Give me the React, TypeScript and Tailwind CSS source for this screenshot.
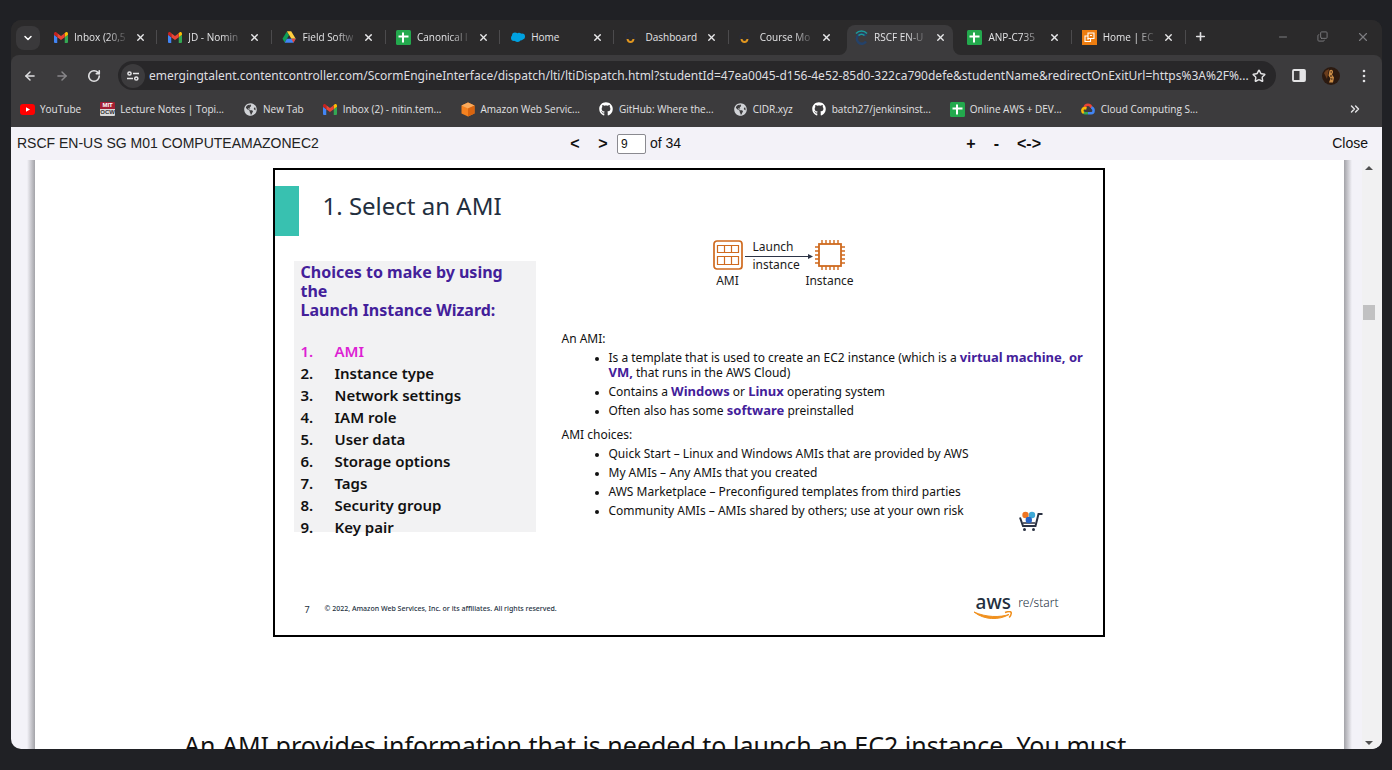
import React from 'react';
import { ArrowLeft, ArrowRight, ChevronDown, ChevronsRight, Copy, Minus, Plus, RotateCw, Star, X } from 'lucide-react';
import { FaGithub, FaGlobeAmericas } from 'react-icons/fa';

function Gmail() {
  return (
    <svg viewBox="0 0 28 22" className="h-[11px] w-[14px]">
      <path fill="#4285f4" d="M2 22h4.500V10.500L0 5.500V20a2 2 0 0 0 2 2z" />
      <path fill="#34a853" d="M21.500 22H26a2 2 0 0 0 2-2V5.500l-6.500 5z" />
      <path fill="#fbbc04" d="M21.500 2.500v8L28 5.500V3c0-2.500-2.800-3.900-4.700-2.400z" />
      <path fill="#ea4335" d="M6.500 10.500v-8L14 8.200l7.500-5.700v8L14 16z" />
      <path fill="#c5221f" d="M0 3v2.500l6.500 5v-8L4.700.6C2.800-.9 0 .5 0 3z" />
    </svg>
  );
}

function Drive() {
  return (
    <svg viewBox="0 0 28 25" className="h-[12px] w-[14px]">
      <path fill="#0f9d58" d="M9.500 1 14 9 5 24 .4 16z" />
      <path fill="#ffcf3f" d="M9.500.5h9L28 16h-9z" />
      <path fill="#4285f4" d="M9.500 16H28l-4.700 8.500H5z" />
      <path fill="#ea4335" d="M19 16h9l-4.700 8.500z" />
    </svg>
  );
}

function Sheets() {
  return (
    <svg viewBox="0 0 15 15" className="size-[15px]">
      <rect width="15" height="15" rx="1.500" fill="#23a94d" />
      <path d="M7 2.500v10M2.500 6.500h10" stroke="#fff" strokeWidth="2" />
    </svg>
  );
}

function Salesforce() {
  return (
    <svg viewBox="0 0 28 20" className="h-[10px] w-[14px]">
      <g fill="#00a1e0">
        <circle cx="8" cy="7" r="6" />
        <circle cx="16" cy="6.500" r="5" />
        <circle cx="22" cy="9" r="6" />
        <circle cx="6" cy="12" r="6" />
        <circle cx="13" cy="14" r="6" />
        <circle cx="19" cy="12" r="5" />
      </g>
    </svg>
  );
}

function Canvas() {
  return (
    <svg viewBox="0 0 14 14" className="size-[14px]">
      <circle cx="5.500" cy="7" r="4.500" fill="none" stroke="#2a2c39" strokeWidth="1.500" />
      <path d="M2.500 9c.5 4 5.500 4 6 0" fill="none" stroke="#e0961f" strokeWidth="2" />
    </svg>
  );
}

function Talent() {
  return (
    <svg viewBox="0 0 14 15" className="h-[15px] w-[14px]" fill="none">
      <path d="M12 6A5 5 0 1 0 12 11.500" stroke="#24426a" strokeWidth="2.400" />
      <path d="M2 3.500c3-3.300 8-3.300 11 0M4.500 5.500c1.700-1.700 4.300-1.700 6 0" stroke="#1c9a9b" strokeWidth="1.600" />
    </svg>
  );
}

function Ec2() {
  return (
    <svg viewBox="0 0 15 15" className="size-[15px]" fill="none">
      <rect width="15" height="15" fill="#ed7d10" />
      <path d="M6 3h6v5.500H6zM8.500 8.500V11.500H3V6h3" stroke="#fff" strokeWidth="1.100" />
      <path d="M8 5.500h2M5 9h2" stroke="#fff" />
    </svg>
  );
}

function YouTube() {
  return (
    <svg viewBox="0 0 15 11" className="h-[11px] w-[15px]">
      <rect width="15" height="11" rx="3" fill="#f00" />
      <path d="M6 3.200v4.600l4-2.300z" fill="#fff" />
    </svg>
  );
}

function MitOcw() {
  return (
    <span aria-hidden="true" className="flex w-[15px] flex-col overflow-hidden rounded-[1px] text-center font-['Liberation_Sans',sans-serif] text-[6px] leading-[7px] font-bold">
      <span className="bg-[#a31f34] text-white">MIT</span>
      <span className="bg-[#d8d8d8] text-[#333]">OCW</span>
    </span>
  );
}

function AwsCube() {
  return (
    <svg viewBox="0 0 14 15" className="h-[15px] w-[14px]">
      <path d="M7 .5 13.500 3.500v8L7 14.500.5 11.500v-8z" fill="#f58220" />
      <path d="M7 .5 13.500 3.500 7 6.500.5 3.500z" fill="#fbaa5c" />
      <path d="M7 6.500l6.500-3v8L7 14.500z" fill="#d9640f" />
    </svg>
  );
}

function GoogleCloud() {
  return (
    <svg viewBox="0 0 28 23" className="h-[12px] w-[14px]" fill="none" strokeWidth="5">
      <path d="M7 9c1.500-8 12-8 14 0" stroke="#ea4335" />
      <path d="M20.500 8.500c6.500 1.500 6 11.500 0 11.500H14" stroke="#4285f4" />
      <path d="M14 20H8l-3-1" stroke="#34a853" />
      <path d="M5.500 19.500C1 17 2 9.500 8 9.500l3 1" stroke="#fbbc04" />
    </svg>
  );
}

const tabs = [
  { title: 'Inbox (20,5', icon: <Gmail />, fade: true },
  { title: 'JD - Nomin', icon: <Gmail />, fade: true },
  { title: 'Field Softw', icon: <Drive />, fade: true },
  { title: 'Canonical l', icon: <Sheets />, fade: true },
  { title: 'Home', icon: <Salesforce /> },
  { title: 'Dashboard', icon: <Canvas /> },
  { title: 'Course Mo', icon: <Canvas />, fade: true },
  { title: 'RSCF EN-U', icon: <Talent />, active: true, fade: true },
  { title: 'ANP-C735', icon: <Sheets />, fade: true },
  { title: 'Home | EC', icon: <Ec2 />, fade: true },
];

const bookmarks = [
  { title: 'YouTube', icon: <YouTube /> },
  { title: 'Lecture Notes | Topi...', icon: <MitOcw /> },
  { title: 'New Tab', icon: <FaGlobeAmericas className="size-[13px] text-[#d0d2d6]" /> },
  { title: 'Inbox (2) - nitin.tem...', icon: <Gmail /> },
  { title: 'Amazon Web Servic...', icon: <AwsCube /> },
  { title: 'GitHub: Where the...', icon: <FaGithub className="size-[14px] text-white" /> },
  { title: 'CIDR.xyz', icon: <FaGlobeAmericas className="size-[13px] text-[#d0d2d6]" /> },
  { title: 'batch27/jenkinsinst...', icon: <FaGithub className="size-[14px] text-white" /> },
  { title: 'Online AWS + DEV...', icon: <Sheets /> },
  { title: 'Cloud Computing S...', icon: <GoogleCloud /> },
];

function TabFlare({ side }: { side: 'left' | 'right' }) {
  return (
    <svg viewBox="0 0 8 8" className={side === 'left' ? 'absolute bottom-0 -left-2 size-2' : 'absolute -right-2 bottom-0 size-2'}>
      <path fill="#3c3b3d" d={side === 'left' ? 'M8 0v8H0a8 8 0 0 0 8-8z' : 'M0 0v8h8a8 8 0 0 1-8-8z'} />
    </svg>
  );
}

function TabStrip() {
  return (
    <div className="flex h-[35px] shrink-0 items-stretch bg-[#2b2a2b]">
      <button aria-label="Search tabs" className="my-auto ml-[5px] flex size-6 items-center justify-center rounded-lg bg-[#3a393b] text-white">
        <ChevronDown className="size-3" strokeWidth={3} />
      </button>
      <div role="tablist" className="ml-[3px] flex min-w-0 flex-1 pt-[5px]">
        {tabs.map((tab, i) => (
          <div key={i} className={tab.active || i === 6 ? 'min-w-0 flex-1' : 'min-w-0 flex-1 bg-[linear-gradient(#4c4b4d,#4c4b4d)] bg-[length:1px_14px] bg-[position:right_5px] bg-no-repeat'}>
            <div className={tab.active ? 'relative mx-1 flex h-[30px] items-center rounded-t-lg bg-[#3c3b3d] pb-[6px]' : 'mx-1 flex h-[30px] items-center pb-[6px]'}>
              {tab.active && <TabFlare side="left" />}
              <button role="tab" aria-selected={!!tab.active} className="ml-[6px] flex min-w-0 flex-1 items-center gap-[6px]">
                <span className="flex w-[15px] shrink-0 justify-center">{tab.icon}</span>
                <span className={tab.fade
                  ? 'flex-1 text-left text-[10px] leading-4 whitespace-nowrap text-[#e4e4e6] [mask-image:linear-gradient(to_right,#000_60%,transparent)]'
                  : 'flex-1 text-left text-[10px] leading-4 whitespace-nowrap text-[#e4e4e6]'}>
                  {tab.title}
                </span>
              </button>
              <button aria-label={'Close ' + tab.title} className="mr-1 ml-[2px] flex size-[18px] shrink-0 items-center justify-center text-[#e8e8ea]">
                <X className="size-[11px]" strokeWidth={3} />
              </button>
              {tab.active && <TabFlare side="right" />}
            </div>
          </div>
        ))}
      </div>
      <div className="flex w-[196px] shrink-0 items-center justify-between pr-3 pb-[2px] pl-2 text-[#7d7d80]">
        <button aria-label="New tab" className="text-[#e0e0e2]">
          <Plus className="size-[13px]" strokeWidth={3} />
        </button>
        <div className="flex gap-7">
          <button aria-label="Minimize"><Minus className="size-3" strokeWidth={2} /></button>
          <button aria-label="Restore"><Copy className="size-[11px] rotate-180 -scale-x-100" strokeWidth={2} /></button>
          <button aria-label="Close window"><X className="size-[14px]" strokeWidth={2} /></button>
        </div>
      </div>
    </div>
  );
}

function AddressBar() {
  return (
    <div className="flex h-[41px] shrink-0 items-center rounded-t-lg bg-[#3c3b3d] text-[#e0e0e2]">
      <button aria-label="Back" className="ml-3"><ArrowLeft className="size-[14px]" strokeWidth={2.500} /></button>
      <button aria-label="Forward" className="ml-[18px] text-[#88878a]"><ArrowRight className="size-[14px]" strokeWidth={2.500} /></button>
      <button aria-label="Reload" className="ml-[18px]"><RotateCw className="size-[14px]" strokeWidth={2.800} /></button>
      <div className="ml-[17px] flex h-[29px] min-w-0 flex-1 items-center rounded-full bg-[#282729] pr-[10px] pl-[3px]">
        <button aria-label="Site information" className="flex size-6 shrink-0 items-center justify-center rounded-full bg-[#3c3b3d]">
          <svg viewBox="0 0 12 10" className="h-[10px] w-3" fill="none" stroke="#e6e6e8" strokeWidth="1.500">
            <circle cx="2.500" cy="2.500" r="1.600" />
            <path d="M6 2.500h6M0 7.500h6" />
            <circle cx="9.300" cy="7.500" r="1.600" />
          </svg>
        </button>
        <input
          aria-label="Address"
          readOnly
          className="ml-1 min-w-0 flex-1 bg-transparent font-['Noto_Sans','Open_Sans',sans-serif] text-[12px] text-[#dedee0] outline-none"
          value="emergingtalent.contentcontroller.com/ScormEngineInterface/dispatch/lti/ltiDispatch.html?studentId=47ea0045-d156-4e52-85d0-322ca790defe&studentName&redirectOnExitUrl=https%3A%2F%..."
        />
        <button aria-label="Bookmark this page" className="ml-px"><Star className="size-[14px]" strokeWidth={2.500} /></button>
      </div>
      <button aria-label="Side panel" className="ml-4">
        <svg viewBox="0 0 14 13" className="h-[13px] w-[14px]">
          <rect x="1" y="1" width="12" height="11" rx="1" fill="none" stroke="#e4e4e6" strokeWidth="1.800" />
          <path d="M7.500 1H13v11H7.500z" fill="#e4e4e6" />
        </svg>
      </button>
      <button aria-label="Profile" className="ml-4">
        <svg viewBox="0 0 18 18" className="size-[18px]">
          <circle cx="9" cy="9" r="9" fill="#2c1a10" />
          <path d="M2 6a8 8 0 0 1 5-4L5 12z" fill="#6b3d1c" />
          <path d="M7.500 3.500c1.500-1.500 4-.5 3.500 2l-1 2 2 3-1 5H7l1.500-4-2-3z" fill="#c98b45" />
          <path d="M8.500 5h1.500M8 9h2M9 12h1.500" stroke="#2c1a10" />
        </svg>
      </button>
      <button aria-label="Menu" className="mr-4 ml-[22px]">
        <svg viewBox="0 0 4 14" className="h-[14px] w-1" fill="#e0e0e2">
          <circle cx="2" cy="2" r="1.300" />
          <circle cx="2" cy="7" r="1.300" />
          <circle cx="2" cy="12" r="1.300" />
        </svg>
      </button>
    </div>
  );
}

function Bookmarks() {
  return (
    <nav aria-label="Bookmarks" className="flex h-[31px] shrink-0 items-center bg-[#3c3b3d] pb-[5px] pl-[9px] text-[10px] whitespace-nowrap text-[#e2e2e4]">
      <div className="flex min-w-0 flex-1 gap-[19px] overflow-hidden">
        {bookmarks.map((b) => (
          <a key={b.title} href="#" className="flex shrink-0 items-center gap-[5px]">
            <span className="flex w-[15px] justify-center">{b.icon}</span>
            {b.title}
          </a>
        ))}
      </div>
      <button aria-label="More bookmarks" className="mr-5"><ChevronsRight className="size-[14px]" strokeWidth={2.500} /></button>
    </nav>
  );
}

function ViewerBar() {
  return (
    <div className="flex h-[33px] shrink-0 items-center bg-[#f3f2f8] pr-[14px] pl-[6px] font-['Liberation_Sans',Arial,sans-serif] text-[14px] text-[#111]">
      <h1 className="w-[552px] text-[#222]">RSCF EN-US SG M01 COMPUTEAMAZONEC2</h1>
      <button aria-label="Previous page" className="w-3 text-[16px] font-bold">&lt;</button>
      <button aria-label="Next page" className="ml-4 w-3 text-[16px] font-bold">&gt;</button>
      <label className="ml-2 flex items-center gap-1">
        <input aria-label="Page number" defaultValue="9" className="h-5 w-[29px] rounded-[2px] border border-[#8a8a90] bg-white px-[3px] text-[12px]" />
        <span>of 34</span>
      </label>
      <div className="flex flex-1 items-center justify-center gap-[18px] pr-[6px] text-[16px] font-bold">
        <button aria-label="Zoom in">+</button>
        <button aria-label="Zoom out">-</button>
        <button aria-label="Fit width">&lt;-&gt;</button>
      </div>
      <button>Close</button>
    </div>
  );
}

const steps = ['AMI', 'Instance type', 'Network settings', 'IAM role', 'User data', 'Storage options', 'Tags', 'Security group', 'Key pair'];

function Diagram() {
  return (
    <div className="ml-[151px] flex items-start text-[12px] leading-4 text-[#1b1b1b]">
      <div className="flex w-[30px] flex-col items-center gap-[3px]">
        <svg viewBox="0 0 30 30" className="size-[30px]" fill="none" stroke="#cf6a1e" strokeWidth="1.700">
          <rect x="1" y="1" width="28" height="28" rx="3" />
          <path d="M4.500 5.500h21v7h-21zM11.500 5.500v7M18.500 5.500v7M4.500 16.500h21v8h-21zM11.500 16.500v8M18.500 16.500v8" strokeWidth="1.200" />
        </svg>
        <span>AMI</span>
      </div>
      <div className="flex w-[72px] flex-col pl-[2px]">
        <span className="pl-2 leading-[14px]">Launch</span>
        <svg viewBox="0 0 68 6" className="h-[6px] w-[68px] shrink-0">
          <path d="M0 2.500h64" stroke="#2c3446" />
          <path d="M63 0l5 2.500-5 2.500z" fill="#2c3446" />
        </svg>
        <span className="pl-2 leading-[10px]">instance</span>
      </div>
      <div className="flex w-[30px] flex-col items-center gap-[3px] whitespace-nowrap">
        <svg viewBox="0 0 30 30" className="size-[30px]" fill="none" stroke="#cf6a1e">
          <rect x="4" y="4" width="22" height="22" strokeWidth="1.800" />
          <path strokeWidth="1.400" d="M7 0v4M11 0v4M15 0v4M19 0v4M23 0v4M7 26v4M11 26v4M15 26v4M19 26v4M23 26v4M0 7h4M0 11h4M0 15h4M0 19h4M0 23h4M26 7h4M26 11h4M26 15h4M26 19h4M26 23h4" />
        </svg>
        <span>Instance</span>
      </div>
    </div>
  );
}

function Key({ children }: { children: React.ReactNode }) {
  return <strong className="text-[13px] leading-none font-bold text-[#43209a]">{children}</strong>;
}

function Slide() {
  return (
    <section className="mx-auto flex h-[469px] w-full max-w-[832px] flex-col border-2 border-black bg-white pt-4">
      <header className="flex h-[50px] shrink-0 items-stretch">
        <span className="w-6 bg-[#38c1b0]" />
        <h2 className="ml-6 text-[24px] leading-10 text-[#232f3e]">1. Select an AMI</h2>
      </header>
      <div className="flex flex-1 items-start">
        <aside className="mt-[25px] ml-[19px] h-[271px] w-[242px] shrink-0 bg-[#f2f2f3] pr-4 pl-[7px] font-bold">
          <h3 className="pt-[2px] text-[16px] leading-[19px] text-[#43209a]">
            Choices to make by using the
            <br />
            Launch Instance Wizard:
          </h3>
          <ol className="mt-5 text-[15px] leading-[22px] font-semibold text-[#111]">
            {steps.map((s, i) => (
              <li key={s} className={i === 0 ? 'flex text-[#dd1fd3]' : 'flex'}>
                <span className="w-[34px]">{i + 1}.</span>
                {s}
              </li>
            ))}
          </ol>
        </aside>
        <div className="mt-1 ml-[26px] min-w-0 flex-1">
          <Diagram />
          <div className="mt-[42px] flex flex-col gap-1 text-[12px] leading-[15px] text-[#111]">
            <p>An AMI:</p>
            <ul className="flex list-disc flex-col gap-1 pr-2 pl-[47px] marker:text-[10px]">
              <li>
                Is a template that is used to create an EC2 instance (which is a <Key>virtual machine, or</Key>
                <br />
                <Key>VM,</Key> that runs in the AWS Cloud)
              </li>
              <li>Contains a <Key>Windows</Key> or <Key>Linux</Key> operating system</li>
              <li>Often also has some <Key>software</Key> preinstalled</li>
            </ul>
            <p className="mt-[5px]">AMI choices:</p>
            <ul className="flex list-disc flex-col gap-1 pl-[47px] marker:text-[10px]">
              <li>Quick Start – Linux and Windows AMIs that are provided by AWS</li>
              <li>My AMIs – Any AMIs that you created</li>
              <li>AWS Marketplace – Preconfigured templates from third parties</li>
              <li>Community AMIs – AMIs shared by others; use at your own risk</li>
            </ul>
          </div>
          <svg viewBox="0 0 24 20" className="-mt-[7px] ml-[457px] h-5 w-6" fill="none">
            <path d="M1 6.500 4 15h12.500L19.500 3H23.500" stroke="#2a3142" strokeWidth="2" />
            <path d="M4 12h12" stroke="#2a3142" strokeWidth="1.500" />
            <circle cx="6.500" cy="4" r="3.200" fill="#ee7624" />
            <circle cx="13" cy="4" r="3.200" fill="#3fa9d6" />
            <circle cx="9.800" cy="9" r="3.200" fill="#2764c4" />
            <circle cx="5.500" cy="18.500" r="1.500" fill="#2a3142" />
            <circle cx="14.500" cy="18.500" r="1.500" fill="#2a3142" />
          </svg>
        </div>
      </div>
      <footer className="flex h-12 shrink-0 items-center pr-11 pb-[3px] pl-[30px] text-[#232f3e]">
        <span className="w-5 text-[9px]">7</span>
        <small className="text-[7px] font-medium">© 2022, Amazon Web Services, Inc. or its affiliates. All rights reserved.</small>
        <div className="ml-auto flex items-start gap-[6px] pb-[6px]">
          <div className="flex w-[38px] flex-col items-center">
            <span className="text-[19px] leading-4 font-medium">aws</span>
            <svg viewBox="0 0 38 9" className="mt-px h-[9px] w-[38px]" fill="none" stroke="#f0901e">
              <path d="M0 1C10 9 25 9.500 35 3.500 26 6.500 12 6.500 0 1z" fill="#f0901e" strokeWidth="1" />
              <path d="M31 1.500c3-1 5.500-1 6-.3.500 1-.3 3.500-1.800 5.300" strokeWidth="1.500" />
            </svg>
          </div>
          <span className="text-[12px] leading-[18px] font-light">re/start</span>
        </div>
      </footer>
    </section>
  );
}

export default function App() {
  return (
    <div className="flex h-screen flex-col bg-[#202125] pt-5 pr-[10px] pb-[21px] pl-[11px] font-['Open_Sans','Noto_Sans',sans-serif]">
      <div className="flex min-h-0 flex-1 flex-col overflow-hidden rounded-[10px] bg-[#2b2a2b]">
        <TabStrip />
        <AddressBar />
        <Bookmarks />
        <ViewerBar />
        <div className="flex min-h-0 flex-1 bg-[#f3f2f8]">
          <main className="flex min-w-0 flex-1 overflow-hidden">
            <div className="w-4 shrink-0" />
            <div className="w-2 shrink-0 bg-linear-to-r from-[#f3f2f8] to-[#a3a3a8]" />
            <article className="min-w-0 flex-1 bg-white pt-2 pr-[2px] font-['Noto_Sans','Open_Sans',sans-serif]">
              <Slide />
              <p className="mt-[90px] px-[149px] text-[25px] leading-9 whitespace-nowrap text-[#111]">
                An AMI provides information that is needed to launch an EC2 instance. You must
              </p>
            </article>
            <div className="w-2 shrink-0 bg-linear-to-r from-[#a3a3a8] to-[#f3f2f8]" />
            <div className="w-[10px] shrink-0" />
          </main>
          <div className="flex w-5 shrink-0 flex-col items-center bg-[#f1f1f2] pt-[6px] pr-[6px] pb-1">
            <span className="border-x-4 border-b-4 border-x-transparent border-b-[#505050]" />
            <span className="mt-[135px] h-[15px] w-3 bg-[#c1c1c2]" />
            <span className="mt-auto border-x-4 border-t-4 border-x-transparent border-t-[#505050]" />
          </div>
        </div>
      </div>
    </div>
  );
}
